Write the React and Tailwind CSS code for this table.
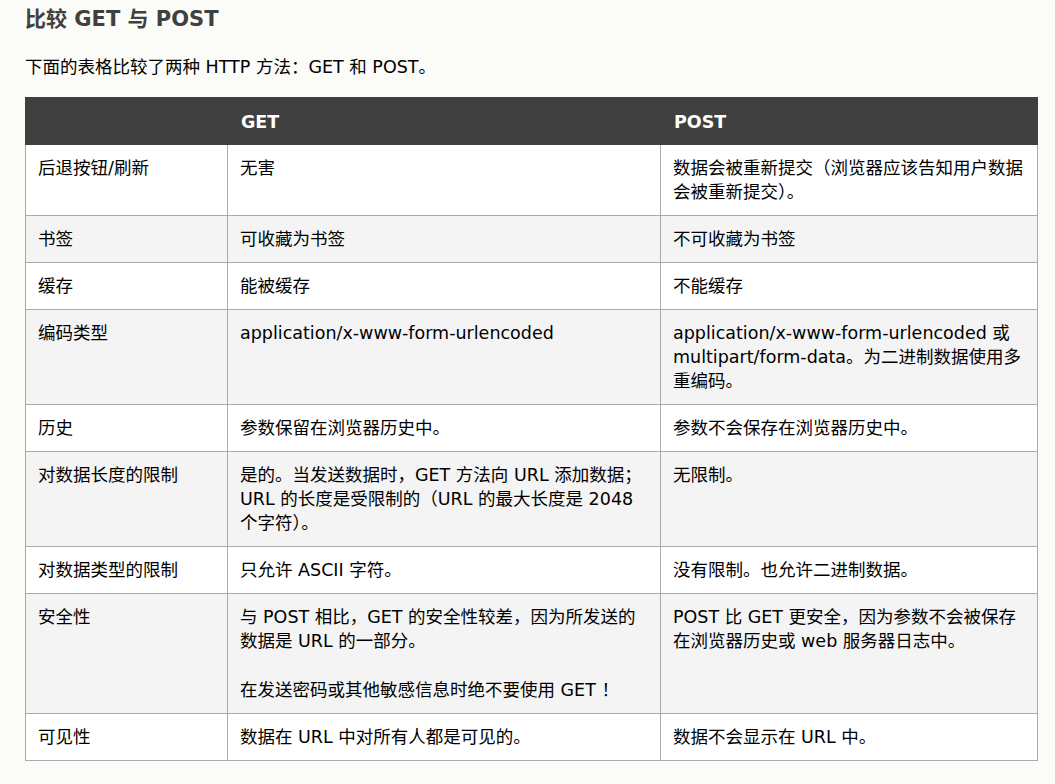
import React from "react";

// 表格数据：[特性, GET, POST]
const rows = [
  ["后退按钮/刷新", ["无害"], ["数据会被重新提交（浏览器应该告知用户数据会被重新提交）。"]],
  ["书签", ["可收藏为书签"], ["不可收藏为书签"]],
  ["缓存", ["能被缓存"], ["不能缓存"]],
  [
    "编码类型",
    ["application/x-www-form-urlencoded"],
    ["application/x-www-form-urlencoded 或 multipart/form-data。为二进制数据使用多重编码。"],
  ],
  ["历史", ["参数保留在浏览器历史中。"], ["参数不会保存在浏览器历史中。"]],
  [
    "对数据长度的限制",
    ["是的。当发送数据时，GET 方法向 URL 添加数据；URL 的长度是受限制的（URL 的最大长度是 2048 个字符）。"],
    ["无限制。"],
  ],
  ["对数据类型的限制", ["只允许 ASCII 字符。"], ["没有限制。也允许二进制数据。"]],
  [
    "安全性",
    [
      "与 POST 相比，GET 的安全性较差，因为所发送的数据是 URL 的一部分。",
      "在发送密码或其他敏感信息时绝不要使用 GET ！",
    ],
    ["POST 比 GET 更安全，因为参数不会被保存在浏览器历史或 web 服务器日志中。"],
  ],
  ["可见性", ["数据在 URL 中对所有人都是可见的。"], ["数据不会显示在 URL 中。"]],
];

function Cell({ paras }) {
  return (
    <td className="border border-[#aaaaaa] px-[12px] pt-[11px] pb-[11px] align-top">
      {paras.map((p, i) => (
        <p key={i} className={i > 0 ? "mt-[25px]" : ""}>
          {p}
        </p>
      ))}
    </td>
  );
}

export default function App() {
  return (
    <div
      className="min-h-screen bg-[#fbfbf7] pl-[25px] pt-[4px] text-black"
      style={{ fontFamily: '"DejaVu Sans", "Noto Sans CJK SC", sans-serif' }}
    >
      <h2 className="text-[21px] leading-[30px] font-bold text-[#404040]">比较 GET 与 POST</h2>
      <p className="mt-[21px] text-[17.5px] leading-[24px]">下面的表格比较了两种 HTTP 方法：GET 和 POST。</p>

      <table className="mt-[18px] w-[1012px] table-fixed border-collapse text-[17.5px] leading-[24px]">
        <colgroup>
          <col className="w-[202px]" />
          <col className="w-[433px]" />
          <col className="w-[377px]" />
        </colgroup>
        <thead>
          <tr className="bg-[#404040] text-white">
            <th className="border border-[#404040] px-[13px] pt-[12px] pb-[10px] text-left font-bold"></th>
            <th className="border border-[#404040] px-[13px] pt-[12px] pb-[10px] text-left font-bold">GET</th>
            <th className="border border-[#404040] px-[13px] pt-[12px] pb-[10px] text-left font-bold">POST</th>
          </tr>
        </thead>
        <tbody>
          {rows.map(([label, get, post], i) => (
            <tr key={label} className={i % 2 === 1 ? "bg-[#f4f4f4]" : "bg-white"}>
              <Cell paras={[label]} />
              <Cell paras={get} />
              <Cell paras={post} />
            </tr>
          ))}
        </tbody>
      </table>
    </div>
  );
}
